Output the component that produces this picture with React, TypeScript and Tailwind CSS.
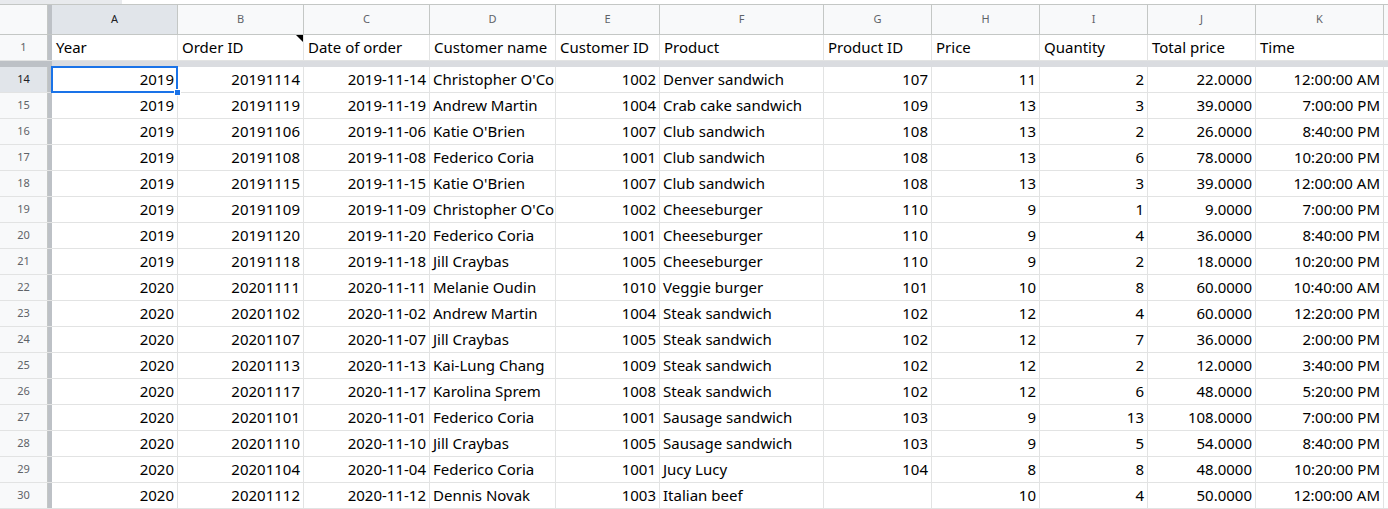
const cols = [
  { l: 'A', w: 126, h: 'Year' },
  { l: 'B', w: 126, h: 'Order ID' },
  { l: 'C', w: 126, h: 'Date of order' },
  { l: 'D', w: 126, h: 'Customer name' },
  { l: 'E', w: 104, h: 'Customer ID' },
  { l: 'F', w: 164, h: 'Product' },
  { l: 'G', w: 108, h: 'Product ID' },
  { l: 'H', w: 108, h: 'Price' },
  { l: 'I', w: 108, h: 'Quantity' },
  { l: 'J', w: 108, h: 'Total price' },
  { l: 'K', w: 128, h: 'Time' },
  { l: 'L', w: 60, h: '' },
];

const rows: (string | number)[][] = [
  [14, 2019, 20191114, '2019-11-14', "Christopher O'Connell", 1002, 'Denver sandwich', 107, 11, 2, '22.0000', '12:00:00 AM'],
  [15, 2019, 20191119, '2019-11-19', 'Andrew Martin', 1004, 'Crab cake sandwich', 109, 13, 3, '39.0000', '7:00:00 PM'],
  [16, 2019, 20191106, '2019-11-06', "Katie O'Brien", 1007, 'Club sandwich', 108, 13, 2, '26.0000', '8:40:00 PM'],
  [17, 2019, 20191108, '2019-11-08', 'Federico Coria', 1001, 'Club sandwich', 108, 13, 6, '78.0000', '10:20:00 PM'],
  [18, 2019, 20191115, '2019-11-15', "Katie O'Brien", 1007, 'Club sandwich', 108, 13, 3, '39.0000', '12:00:00 AM'],
  [19, 2019, 20191109, '2019-11-09', "Christopher O'Connell", 1002, 'Cheeseburger', 110, 9, 1, '9.0000', '7:00:00 PM'],
  [20, 2019, 20191120, '2019-11-20', 'Federico Coria', 1001, 'Cheeseburger', 110, 9, 4, '36.0000', '8:40:00 PM'],
  [21, 2019, 20191118, '2019-11-18', 'Jill Craybas', 1005, 'Cheeseburger', 110, 9, 2, '18.0000', '10:20:00 PM'],
  [22, 2020, 20201111, '2020-11-11', 'Melanie Oudin', 1010, 'Veggie burger', 101, 10, 8, '60.0000', '10:40:00 AM'],
  [23, 2020, 20201102, '2020-11-02', 'Andrew Martin', 1004, 'Steak sandwich', 102, 12, 4, '60.0000', '12:20:00 PM'],
  [24, 2020, 20201107, '2020-11-07', 'Jill Craybas', 1005, 'Steak sandwich', 102, 12, 7, '36.0000', '2:00:00 PM'],
  [25, 2020, 20201113, '2020-11-13', 'Kai-Lung Chang', 1009, 'Steak sandwich', 102, 12, 2, '12.0000', '3:40:00 PM'],
  [26, 2020, 20201117, '2020-11-17', 'Karolina Sprem', 1008, 'Steak sandwich', 102, 12, 6, '48.0000', '5:20:00 PM'],
  [27, 2020, 20201101, '2020-11-01', 'Federico Coria', 1001, 'Sausage sandwich', 103, 9, 13, '108.0000', '7:00:00 PM'],
  [28, 2020, 20201110, '2020-11-10', 'Jill Craybas', 1005, 'Sausage sandwich', 103, 9, 5, '54.0000', '8:40:00 PM'],
  [29, 2020, 20201104, '2020-11-04', 'Federico Coria', 1001, 'Jucy Lucy', 104, 8, 8, '48.0000', '10:20:00 PM'],
  [30, 2020, 20201112, '2020-11-12', 'Dennis Novak', 1003, 'Italian beef', '', 10, 4, '50.0000', '12:00:00 AM'],
];

// text columns are left aligned, the rest right aligned
const leftCols = [3, 5];

export default function App() {
  return (
    <div className="w-[1388px] h-[509px] overflow-hidden bg-white text-[#000] font-['Liberation_Sans',Arial,sans-serif]">
      {/* top strip */}
      <div className="h-[5px] flex border-b border-[#c4c7c5]">
        <div className="w-[122px] bg-[#e8eaed]" />
      </div>

      {/* column letters */}
      <div className="flex h-[30px] bg-[#f8f9fa] text-[11px] text-[#5f6368] border-b border-[#c4c7c5]">
        <div className="w-[52px] shrink-0 flex">
          <div className="w-[48px] border-r border-[#c4c7c5]" />
          <div className="w-[4px] bg-[#bdc1c6]" />
        </div>
        {cols.map((c, i) => (
          <div
            key={c.l}
            style={{ width: c.w }}
            className={`shrink-0 flex items-center justify-center border-r border-[#c4c7c5] ${i === 0 ? 'bg-[#e1e5ea] text-[#202124]' : ''}`}
          >
            {c.l}
          </div>
        ))}
      </div>

      {/* header row 1 */}
      <div className="flex h-[26px] text-[15px] border-b border-[#e2e3e3]">
        <div className="w-[52px] shrink-0 flex">
          <div className="w-[48px] bg-[#f8f9fa] text-[11px] text-[#5f6368] flex items-center justify-center border-r border-[#c4c7c5]">1</div>
          <div className="w-[4px] bg-[#bdc1c6]" />
        </div>
        {cols.map((c, i) => (
          <div
            key={c.l}
            style={{ width: c.w }}
            className="relative shrink-0 flex items-center px-[4px] border-r border-[#e2e3e3] whitespace-nowrap overflow-hidden"
          >
            {c.h}
            {i === 1 && (
              <div className="absolute top-0 right-0 w-0 h-0 border-t-[7px] border-l-[7px] border-t-black border-l-transparent" />
            )}
          </div>
        ))}
      </div>

      {/* freeze line */}
      <div className="flex h-[6px]">
        <div className="w-[52px] bg-[#bdc1c6]" />
        <div className="flex-1 bg-[#dadce0]" />
      </div>

      {rows.map((r, ri) => (
        <div key={r[0]} className="flex h-[26px] text-[15px] border-b border-[#e2e3e3]">
          <div className="w-[52px] shrink-0 flex">
            <div className={`w-[48px] text-[11px] flex items-center justify-center border-r border-[#c4c7c5] ${ri === 0 ? 'bg-[#e1e5ea] text-[#202124]' : 'bg-[#f8f9fa] text-[#5f6368]'}`}>{r[0]}</div>
            <div className="w-[4px] bg-[#bdc1c6]" />
          </div>
          {cols.map((c, ci) => {
            const v = ci < 11 ? r[ci + 1] : '';
            const left = leftCols.includes(ci);
            const sel = ri === 0 && ci === 0;
            return (
              <div
                key={c.l}
                style={{ width: c.w }}
                className={`relative shrink-0 flex items-center px-[3px] border-r border-[#e2e3e3] whitespace-nowrap overflow-hidden ${left ? 'justify-start' : 'justify-end'} ${sel ? 'overflow-visible z-10' : ''}`}
              >
                {v}
                {sel && (
                  <>
                    <div className="absolute inset-[-1px] border-2 border-[#1a73e8]" />
                    <div className="absolute right-[-4px] bottom-[-4px] w-[7px] h-[7px] bg-[#1a73e8] border border-white" />
                  </>
                )}
              </div>
            );
          })}
        </div>
      ))}
    </div>
  );
}
